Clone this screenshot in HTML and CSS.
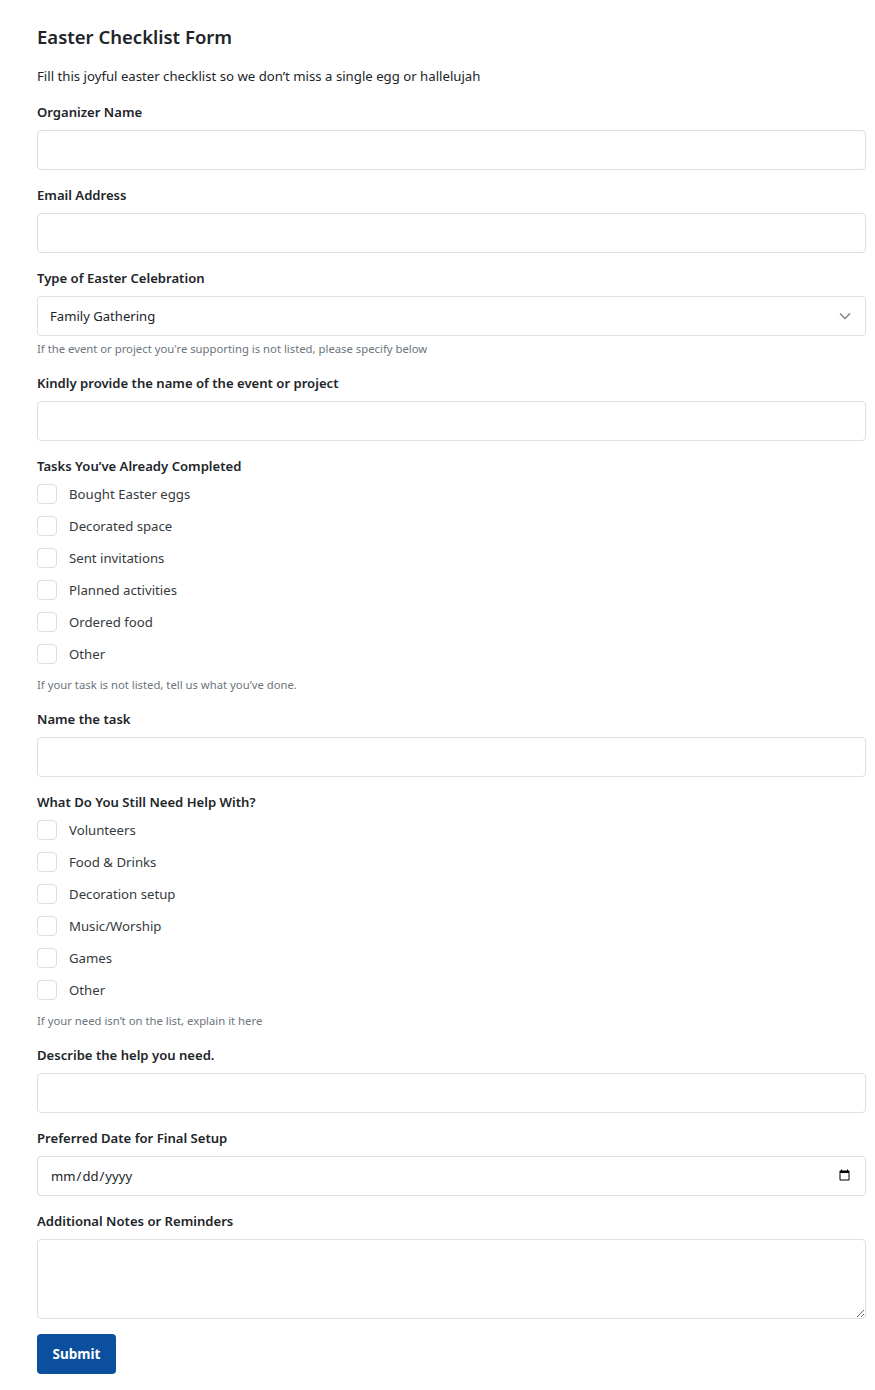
FILE: index.html
```html
<!DOCTYPE html>
<html lang="en">
<head>
<meta charset="utf-8">
<title>Easter Checklist Form</title>
<link rel="stylesheet" href="styles.css">
</head>
<body>
<form class="form">
  <h1 class="title">Easter Checklist Form</h1>
  <p class="desc">Fill this joyful easter checklist so we don’t miss a single egg or hallelujah</p>

  <div class="field">
    <label class="label">Organizer Name</label>
    <input class="control" type="text">
  </div>

  <div class="field">
    <label class="label">Email Address</label>
    <input class="control" type="email">
  </div>

  <div class="field">
    <label class="label">Type of Easter Celebration</label>
    <div class="select-wrap">
      <select class="control select">
        <option>Family Gathering</option>
        <option>Church Service</option>
        <option>Community Event</option>
      </select>
      <svg class="chev" width="12" height="8" viewBox="0 0 12 8"><path d="M1 1.5l5 5 5-5" fill="none" stroke="#7a7f85" stroke-width="1.3"/></svg>
    </div>
    <div class="help">If the event or project you're supporting is not listed, please specify below</div>
  </div>

  <div class="field">
    <label class="label">Kindly provide the name of the event or project</label>
    <input class="control" type="text">
  </div>

  <div class="field">
    <label class="label">Tasks You’ve Already Completed</label>
    <div class="checks">
      <label class="check"><input type="checkbox"><span>Bought Easter eggs</span></label>
      <label class="check"><input type="checkbox"><span>Decorated space</span></label>
      <label class="check"><input type="checkbox"><span>Sent invitations</span></label>
      <label class="check"><input type="checkbox"><span>Planned activities</span></label>
      <label class="check"><input type="checkbox"><span>Ordered food</span></label>
      <label class="check"><input type="checkbox"><span>Other</span></label>
    </div>
    <div class="help help-checks">If your task is not listed, tell us what you’ve done.</div>
  </div>

  <div class="field">
    <label class="label">Name the task</label>
    <input class="control" type="text">
  </div>

  <div class="field">
    <label class="label">What Do You Still Need Help With?</label>
    <div class="checks">
      <label class="check"><input type="checkbox"><span>Volunteers</span></label>
      <label class="check"><input type="checkbox"><span>Food &amp; Drinks</span></label>
      <label class="check"><input type="checkbox"><span>Decoration setup</span></label>
      <label class="check"><input type="checkbox"><span>Music/Worship</span></label>
      <label class="check"><input type="checkbox"><span>Games</span></label>
      <label class="check"><input type="checkbox"><span>Other</span></label>
    </div>
    <div class="help help-checks">If your need isn’t on the list, explain it here</div>
  </div>

  <div class="field">
    <label class="label">Describe the help you need.</label>
    <input class="control" type="text">
  </div>

  <div class="field">
    <label class="label">Preferred Date for Final Setup</label>
    <input class="control" type="date">
  </div>

  <div class="field">
    <label class="label">Additional Notes or Reminders</label>
    <textarea class="control area"></textarea>
  </div>

  <button class="submit" type="button">Submit</button>
</form>
</body>
</html>
```

FILE: styles.css
```css
* { box-sizing: border-box; }

html, body {
  margin: 0;
  padding: 0;
  background: #ffffff;
}

body {
  font-family: "Noto Sans", "Open Sans", "DejaVu Sans", sans-serif;
  color: #212529;
  font-size: 13px;
}

.form {
  width: 829px;
  margin: 0 0 0 37px;
  padding-top: 25px;
}

.title {
  margin: 0 0 17px;
  font-size: 18.5px;
  line-height: 24px;
  font-weight: 600;
  color: #212529;
}

.desc {
  margin: 0 0 15px;
  font-size: 13.2px;
  line-height: 21px;
}

.field {
  margin-bottom: 15px;
}

.label {
  display: block;
  font-size: 13.1px;
  line-height: 20px;
  font-weight: 600;
  margin-bottom: 8px;
}

.control {
  display: block;
  width: 100%;
  height: 40px;
  border: 1px solid #dcdfe3;
  border-radius: 4px;
  padding: 0 12px;
  font-family: inherit;
  font-size: 13.1px;
  color: #212529;
  background: #fff;
  outline: none;
}

.select-wrap {
  position: relative;
}

.select {
  appearance: none;
  -webkit-appearance: none;
}

.chev {
  position: absolute;
  right: 15px;
  top: 16px;
  pointer-events: none;
}

.area {
  height: 80px;
  padding: 8px 12px;
  resize: vertical;
}

.help {
  margin-top: 4px;
  font-size: 11.3px;
  line-height: 18px;
  color: #6c757d;
}

.help-checks {
  margin-top: 12px;
}

.checks {
  display: flex;
  flex-direction: column;
  gap: 12px;
}

.check {
  display: flex;
  align-items: center;
  height: 20px;
  font-size: 13.2px;
  color: #343a40;
}

.check input {
  appearance: none;
  -webkit-appearance: none;
  width: 20px;
  height: 20px;
  margin: 0 12px 0 0;
  border: 1px solid #dcdfe3;
  border-radius: 4px;
  background: #fff;
  flex: none;
}

.submit {
  display: block;
  height: 40px;
  width: 79px;
  border: none;
  border-radius: 4px;
  background: #0b4f9e;
  color: #fff;
  font-family: inherit;
  font-size: 13.5px;
  font-weight: 700;
  padding: 0;
}
```
